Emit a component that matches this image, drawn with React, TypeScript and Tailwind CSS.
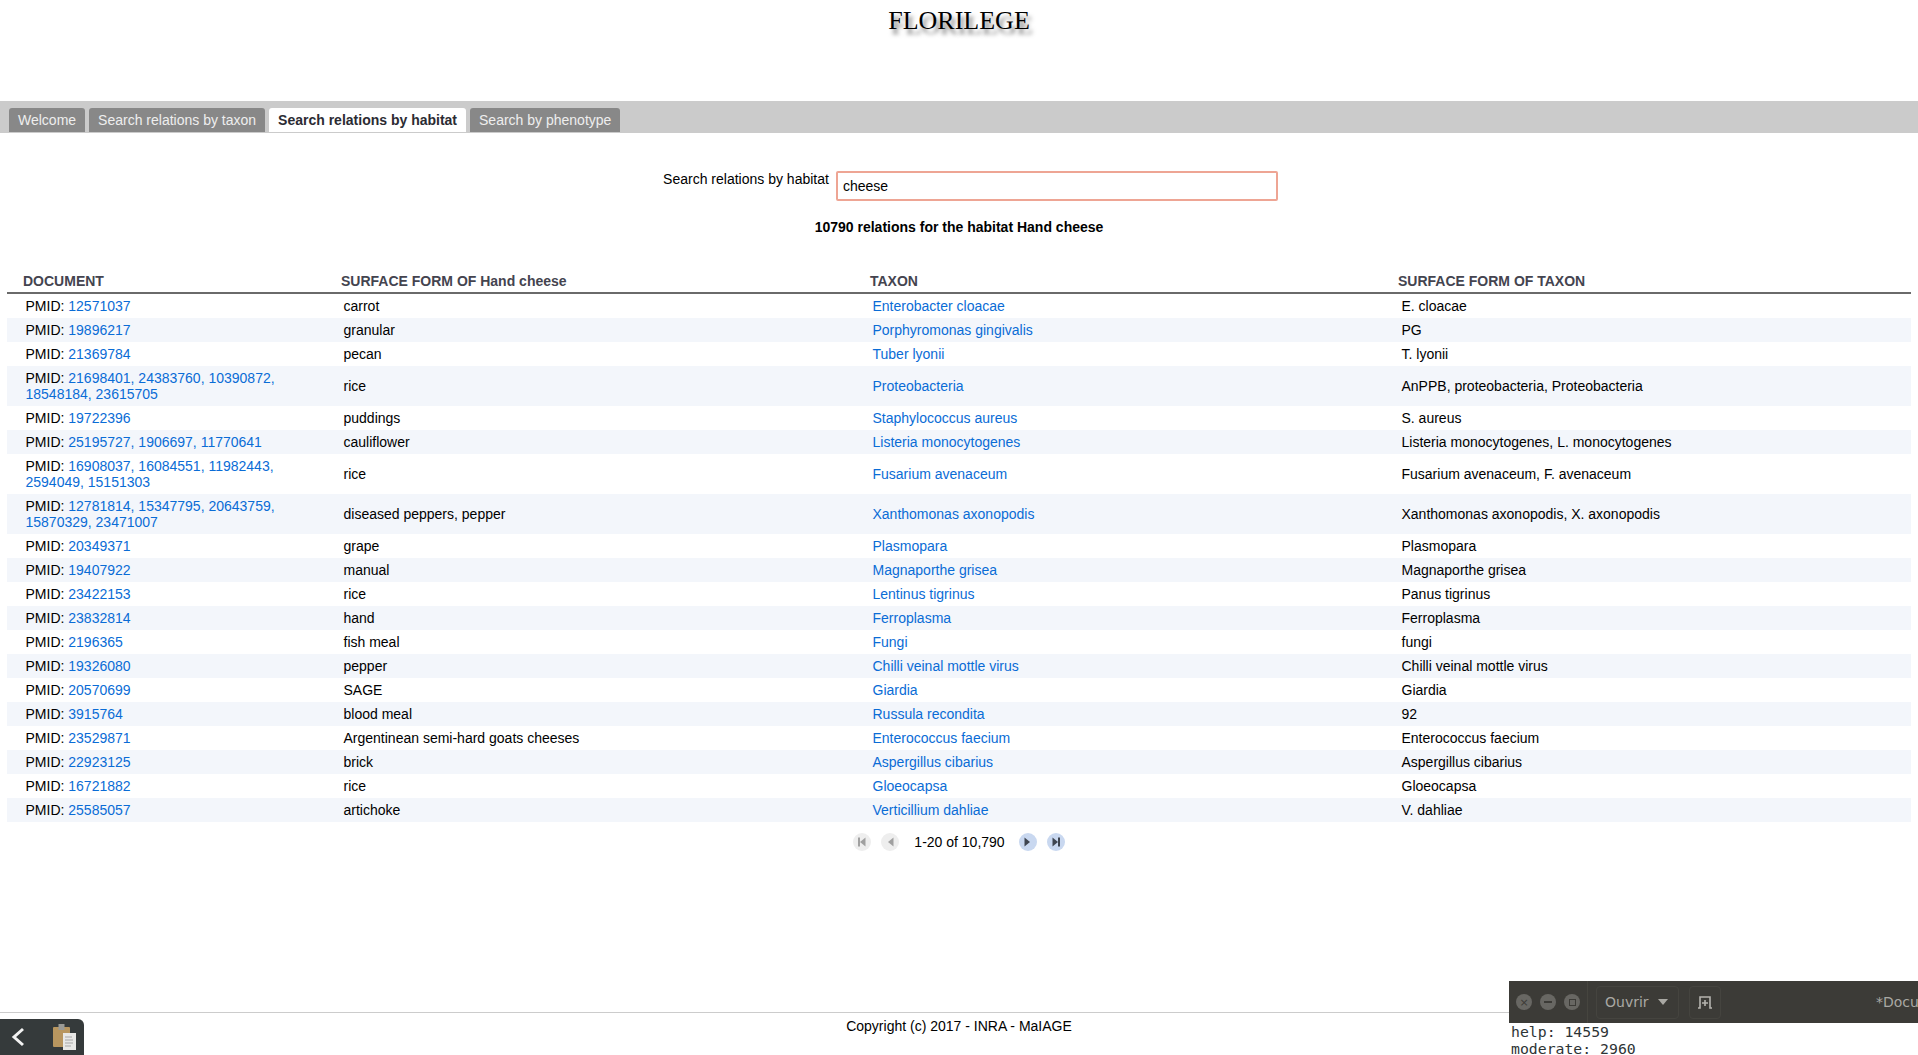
const rows: { ids: string[]; form: string; taxon: string; surface: string }[] = [
  { ids: ['12571037'], form: 'carrot', taxon: 'Enterobacter cloacae', surface: 'E. cloacae' },
  { ids: ['19896217'], form: 'granular', taxon: 'Porphyromonas gingivalis', surface: 'PG' },
  { ids: ['21369784'], form: 'pecan', taxon: 'Tuber lyonii', surface: 'T. lyonii' },
  {
    ids: ['21698401', '24383760', '10390872', '18548184', '23615705'],
    form: 'rice',
    taxon: 'Proteobacteria',
    surface: 'AnPPB, proteobacteria, Proteobacteria',
  },
  { ids: ['19722396'], form: 'puddings', taxon: 'Staphylococcus aureus', surface: 'S. aureus' },
  {
    ids: ['25195727', '1906697', '11770641'],
    form: 'cauliflower',
    taxon: 'Listeria monocytogenes',
    surface: 'Listeria monocytogenes, L. monocytogenes',
  },
  {
    ids: ['16908037', '16084551', '11982443', '2594049', '15151303'],
    form: 'rice',
    taxon: 'Fusarium avenaceum',
    surface: 'Fusarium avenaceum, F. avenaceum',
  },
  {
    ids: ['12781814', '15347795', '20643759', '15870329', '23471007'],
    form: 'diseased peppers, pepper',
    taxon: 'Xanthomonas axonopodis',
    surface: 'Xanthomonas axonopodis, X. axonopodis',
  },
  { ids: ['20349371'], form: 'grape', taxon: 'Plasmopara', surface: 'Plasmopara' },
  { ids: ['19407922'], form: 'manual', taxon: 'Magnaporthe grisea', surface: 'Magnaporthe grisea' },
  { ids: ['23422153'], form: 'rice', taxon: 'Lentinus tigrinus', surface: 'Panus tigrinus' },
  { ids: ['23832814'], form: 'hand', taxon: 'Ferroplasma', surface: 'Ferroplasma' },
  { ids: ['2196365'], form: 'fish meal', taxon: 'Fungi', surface: 'fungi' },
  { ids: ['19326080'], form: 'pepper', taxon: 'Chilli veinal mottle virus', surface: 'Chilli veinal mottle virus' },
  { ids: ['20570699'], form: 'SAGE', taxon: 'Giardia', surface: 'Giardia' },
  { ids: ['3915764'], form: 'blood meal', taxon: 'Russula recondita', surface: '92' },
  { ids: ['23529871'], form: 'Argentinean semi-hard goats cheeses', taxon: 'Enterococcus faecium', surface: 'Enterococcus faecium' },
  { ids: ['22923125'], form: 'brick', taxon: 'Aspergillus cibarius', surface: 'Aspergillus cibarius' },
  { ids: ['16721882'], form: 'rice', taxon: 'Gloeocapsa', surface: 'Gloeocapsa' },
  { ids: ['25585057'], form: 'artichoke', taxon: 'Verticillium dahliae', surface: 'V. dahliae' },
];

const tabs = ['Welcome', 'Search relations by taxon', 'Search relations by habitat', 'Search by phenotype'];

// PrimeFaces-style pager button: round background, triangle and optional bar
function PagerButton({ dir, end, on }: { dir: 'left' | 'right'; end?: boolean; on?: boolean }) {
  const fill = on ? '#3f4550' : '#a0a0a0';
  return (
    <span className={`flex h-[18px] w-[18px] shrink-0 items-center justify-center rounded-full ${on ? 'bg-[#c9d8f0]' : 'bg-[#eeeeee]'}`}>
      <svg width="10" height="10" viewBox="0 0 10 10">
        {dir === 'left' ? <path d="M8.5 0.5v9L3 5z" fill={fill} /> : <path d="M1.5 0.5v9L7 5z" fill={fill} />}
        {end && <rect x={dir === 'left' ? 1 : 7} y="0.5" width="2" height="9" fill={fill} />}
      </svg>
    </span>
  );
}

function Clipboard() {
  return (
    <svg width="26" height="28" viewBox="0 0 26 28">
      <rect x="1" y="4" width="17" height="20" rx="1" fill="#b8965f" />
      <rect x="6.5" y="1" width="6" height="6" fill="#9a9a96" />
      <rect x="11" y="10" width="13" height="17" fill="#e8e8e6" />
      <path d="M13 14h7M13 17h8M13 20h8M13 23h6" stroke="#a5a5a5" strokeWidth="1.2" />
    </svg>
  );
}

export default function App() {
  return (
    <div className="relative flex h-[1055px] flex-col overflow-hidden bg-white font-['Liberation_Sans',Arial,sans-serif] text-[14px] text-black">
      <header className="flex h-[101px] justify-center pt-[6px]">
        <h1 className="font-['Liberation_Serif',serif] text-[26px] leading-[30px] [text-shadow:3px_5px_4px_#777]">
          FLORILEGE
        </h1>
      </header>

      <nav className="flex h-[32px] items-start gap-[4px] bg-[#cbcbcb] pl-[9px] pt-[7px]">
        {tabs.map((tab, i) => (
          <span
            key={tab}
            className={`flex h-[24px] items-center rounded-t-[3px] px-[9px] ${
              i === 2 ? 'bg-white font-bold text-[#2b2b33]' : 'bg-[#888888] text-[#eeeeee]'
            }`}
          >
            {tab}
          </span>
        ))}
      </nav>

      <main className="px-[7px]">
        <div className="mt-[38px] flex justify-center gap-[7px] pl-[23px]">
          <label className="leading-[16px]">Search relations by habitat</label>
          <div className="flex h-[30px] w-[442px] items-center rounded-[2px] border-2 border-[#eea594] pl-[5px] pt-[1px]">
            cheese
          </div>
        </div>

        <p className="mt-[18px] text-center font-bold leading-[16px]">10790 relations for the habitat Hand cheese</p>

        <table className="mt-[33px] w-full table-fixed border-collapse">
          <colgroup>
            <col className="w-[317px]" />
            <col className="w-[530px]" />
            <col className="w-[528px]" />
            <col />
          </colgroup>
          <thead>
            <tr className="h-[25px] border-b-2 border-[#6a6a6a] text-left font-bold text-[#44444f]">
              <th className="pl-[16px] align-bottom">DOCUMENT</th>
              <th className="pl-[17px] align-bottom">SURFACE FORM OF Hand cheese</th>
              <th className="pl-[16px] align-bottom">TAXON</th>
              <th className="pl-[16px] align-bottom">SURFACE FORM OF TAXON</th>
            </tr>
          </thead>
          <tbody>
            {rows.map((row, i) => (
              <tr key={row.taxon + i} className={i % 2 === 1 ? 'bg-[#f3f6fb]' : ''}>
                <td className="py-[4px] pl-[18.5px] pr-[30px] leading-[16px]">
                  PMID:{' '}
                  <span className="text-[#0a6cd6]">{row.ids.join(', ')}</span>
                </td>
                <td className="pl-[19.5px] leading-[16px]">{row.form}</td>
                <td className="pl-[18.5px] leading-[16px] text-[#0a6cd6]">{row.taxon}</td>
                <td className="pl-[19.5px] leading-[16px]">{row.surface}</td>
              </tr>
            ))}
          </tbody>
        </table>

        <div className="mt-[11px] flex items-center justify-center">
          <PagerButton dir="left" end />
          <span className="ml-[10px]"><PagerButton dir="left" /></span>
          <span className="ml-[15px] whitespace-nowrap leading-[18px]">1-20 of 10,790</span>
          <span className="ml-[14px]"><PagerButton dir="right" on /></span>
          <span className="ml-[10px]"><PagerButton dir="right" end on /></span>
        </div>
      </main>

      <footer className="mt-auto h-[43px] border-t border-[#cccccc] pt-[5px] text-center leading-[16px]">
        Copyright (c) 2017 - INRA - MaIAGE
      </footer>

      {/* Launcher strip from the desktop, over the page */}
      <div className="absolute bottom-0 left-0 flex h-[36px] w-[84px] items-center rounded-tr-[6px] bg-[#353a3b]">
        <svg className="ml-[11px]" width="14" height="20" viewBox="0 0 14 20">
          <path d="M12 2 3 10l9 8" fill="none" stroke="#f2f2f2" strokeWidth="3" />
        </svg>
        <span className="ml-[27px]"><Clipboard /></span>
      </div>

      {/* Text editor window overlapping the bottom right corner */}
      <div className="absolute left-[1509px] top-[981px] h-[74px] w-[409px] overflow-hidden bg-white">
        <div className="flex h-[42px] items-center overflow-hidden whitespace-nowrap bg-[#3c3b37] font-['DejaVu_Sans',sans-serif] text-[#a9a8a3]">
          <span className="ml-[7px] flex h-[16px] w-[16px] shrink-0 items-center justify-center rounded-full bg-[#686763] text-[11px] leading-none text-[#3c3b37]">×</span>
          <span className="ml-[8px] flex h-[16px] w-[16px] shrink-0 items-center justify-center rounded-full bg-[#686763]">
            <span className="h-[2px] w-[8px] bg-[#3c3b37]" />
          </span>
          <span className="ml-[8px] flex h-[16px] w-[16px] shrink-0 items-center justify-center rounded-full bg-[#686763]">
            <span className="h-[7px] w-[7px] border border-[#3c3b37]" />
          </span>
          <span className="ml-[7px] h-[42px] w-px shrink-0 bg-[#46453f]" />
          <span className="ml-[8px] flex h-[33px] w-[83px] shrink-0 items-center rounded-[4px] border border-[#45443f] pl-[8px] text-[14px]">
            Ouvrir
            <svg className="ml-[9px]" width="10" height="6" viewBox="0 0 10 6">
              <path d="M0 0h10L5 6z" fill="#a9a8a3" />
            </svg>
          </span>
          <span className="ml-[10px] flex h-[33px] w-[32px] shrink-0 items-center justify-center rounded-[4px] border border-[#45443f]">
            <svg width="16" height="14" viewBox="0 0 16 14">
              <path d="M1 13h2V2h10v11h2" fill="none" stroke="#b5b4af" strokeWidth="1.6" />
              <path d="M8 5v6M5 8h6" stroke="#b5b4af" strokeWidth="1.6" />
            </svg>
          </span>
          <span className="ml-[155px] shrink-0 text-[14px]">*Document</span>
        </div>
        <pre className="pl-[2px] font-['DejaVu_Sans_Mono',monospace] text-[14.8px] leading-[17.3px] text-[#2e3436]">
          help: 14559{'\n'}moderate: 2960
        </pre>
      </div>
    </div>
  );
}
